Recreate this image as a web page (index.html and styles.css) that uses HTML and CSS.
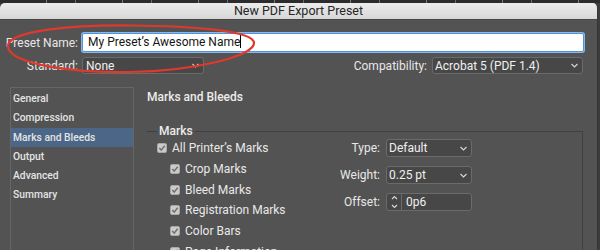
FILE: index.html
```html
<!DOCTYPE html>
<html>
<head>
<meta charset="utf-8">
<link rel="stylesheet" href="styles.css">
</head>
<body>
<div class="backdrop"></div>
<div class="dialog">
  <div class="titlebar">New PDF Export Preset</div>
  <div class="content-wrap">
    <div class="row row-name">
      <span class="lbl">Preset Name:</span>
      <div class="text-input">My Preset’s Awesome Name<span class="caret"></span></div>
    </div>
    <div class="row row-std">
      <span class="lbl">Standard:</span>
      <div class="select w-std"><span>None</span><svg class="chev" width="7" height="5" viewBox="0 0 7 5"><path d="M0.5 1 L3.5 4 L6.5 1"/></svg></div>
      <span class="lbl-compat">Compatibility:</span>
      <div class="select w-compat"><span>Acrobat 5 (PDF 1.4)</span><svg class="chev" width="7" height="5" viewBox="0 0 7 5"><path d="M0.5 1 L3.5 4 L6.5 1"/></svg></div>
    </div>
    <div class="main">
      <ul class="nav">
        <li>General</li>
        <li>Compression</li>
        <li class="active">Marks and Bleeds</li>
        <li>Output</li>
        <li>Advanced</li>
        <li>Summary</li>
      </ul>
      <section class="panel">
        <h2 class="panel-title">Marks and Bleeds</h2>
        <fieldset class="group">
          <legend>Marks</legend>
          <div class="group-body">
            <div class="checks">
              <div class="check"><svg class="cb" width="10" height="10" viewBox="0 0 10 10"><rect x="0.5" y="0.5" width="9" height="9" rx="1.5"/><path d="M2.3 5.1 L4.2 7.1 L7.7 2.7"/></svg>All Printer’s Marks</div>
              <div class="check sub"><svg class="cb" width="10" height="10" viewBox="0 0 10 10"><rect x="0.5" y="0.5" width="9" height="9" rx="1.5"/><path d="M2.3 5.1 L4.2 7.1 L7.7 2.7"/></svg>Crop Marks</div>
              <div class="check sub"><svg class="cb" width="10" height="10" viewBox="0 0 10 10"><rect x="0.5" y="0.5" width="9" height="9" rx="1.5"/><path d="M2.3 5.1 L4.2 7.1 L7.7 2.7"/></svg>Bleed Marks</div>
              <div class="check sub"><svg class="cb" width="10" height="10" viewBox="0 0 10 10"><rect x="0.5" y="0.5" width="9" height="9" rx="1.5"/><path d="M2.3 5.1 L4.2 7.1 L7.7 2.7"/></svg>Registration Marks</div>
              <div class="check sub"><svg class="cb" width="10" height="10" viewBox="0 0 10 10"><rect x="0.5" y="0.5" width="9" height="9" rx="1.5"/><path d="M2.3 5.1 L4.2 7.1 L7.7 2.7"/></svg>Color Bars</div>
              <div class="check sub"><svg class="cb" width="10" height="10" viewBox="0 0 10 10"><rect x="0.5" y="0.5" width="9" height="9" rx="1.5"/><path d="M2.3 5.1 L4.2 7.1 L7.7 2.7"/></svg>Page Information</div>
            </div>
            <div class="options">
              <span class="opt-lbl">Type:</span>
              <div class="select opt"><span>Default</span><svg class="chev" width="7" height="5" viewBox="0 0 7 5"><path d="M0.5 1 L3.5 4 L6.5 1"/></svg></div>
              <span class="opt-lbl">Weight:</span>
              <div class="select opt"><span>0.25 pt</span><svg class="chev" width="7" height="5" viewBox="0 0 7 5"><path d="M0.5 1 L3.5 4 L6.5 1"/></svg></div>
              <span class="opt-lbl">Offset:</span>
              <div class="spin">
                <div class="spin-btn"><svg width="7" height="14" viewBox="0 0 7 14"><path d="M1 4 L3.5 1.5 L6 4"/><path d="M1 10 L3.5 12.5 L6 10"/></svg></div>
                <span class="spin-val">0p6</span>
              </div>
            </div>
          </div>
        </fieldset>
      </section>
    </div>
  </div>
</div>
<svg class="annotation" width="600" height="250" viewBox="0 0 600 250">
  <path d="M 8 46 C 8 31, 70 25, 130 25.5 C 195 26, 254 31, 254 43 C 254 56, 195 71, 130 72 C 62 73, 8 62, 8 46 Z"/>
</svg>
</body>
</html>
```

FILE: styles.css
```css
html, body {
  margin: 0;
  padding: 0;
}
body {
  width: 600px;
  height: 250px;
  overflow: hidden;
  background: #3c3c3c;
  font-family: Roboto, "Liberation Sans", sans-serif;
  font-size: 12px;
  color: #e8e8e8;
}
.backdrop {
  height: 3px;
  background: repeating-linear-gradient(90deg, #2c2c2c 0 46px, #7a7a7a 46px 47px, #2c2c2c 47px 75px, #6a6a6a 75px 76px);
}
.dialog {
  width: 597px;
  height: 247px;
  background: #535353;
  border-radius: 5px 5px 0 0;
  overflow: hidden;
  border-right: 1px solid #353535;
}
.titlebar {
  height: 16px;
  line-height: 16px;
  text-align: center;
  font-size: 12.5px;
  color: #262626;
  background: linear-gradient(#ececec, #d6d6d6);
  border-bottom: 1px solid #464646;
}
.content-wrap {
  padding-top: 13px;
}
.row {
  display: flex;
  align-items: center;
}
.row-name {
  height: 19px;
}
.lbl {
  width: 78px;
  margin-right: 4px;
  text-align: right;
  flex: none;
}
.text-input {
  flex: none;
  width: 502px;
  height: 19px;
  box-sizing: border-box;
  background: #ffffff;
  border: 1px solid #4f92dc;
  box-shadow: 0 0 0 1px #8ab8ea;
  border-radius: 2px;
  padding-left: 5px;
  line-height: 17px;
  color: #151515;
  white-space: nowrap;
}
.caret {
  display: inline-block;
  width: 1px;
  height: 13px;
  background: #000;
  vertical-align: -2px;
}
.row-std {
  margin-top: 5px;
  height: 17px;
  padding-right: 14px;
}
.lbl-compat {
  margin-left: auto;
  margin-right: 5px;
}
.select {
  box-sizing: border-box;
  height: 17px;
  background: #474747;
  border: 1px solid #6b6b6b;
  border-radius: 3px;
  display: flex;
  align-items: center;
  justify-content: space-between;
  padding: 0 4px 0 3px;
  color: #f0f0f0;
  white-space: nowrap;
}
.w-std { width: 122px; flex: none; }
.w-compat { width: 151px; flex: none; padding-left: 2px; }
.chev path, .spin-btn path {
  fill: none;
  stroke: #d8d8d8;
  stroke-width: 1.1;
}
.main {
  margin-top: 13px;
  display: flex;
}
.nav {
  list-style: none;
  margin: 0 0 0 10px;
  padding: 1px 0 0;
  width: 124px;
  height: 170px;
  box-sizing: border-box;
  border: 1px solid #666666;
  border-bottom: none;
  flex: none;
}
.nav li {
  height: 19.3px;
  line-height: 19px;
  padding-left: 2px;
  font-size: 10.3px;
  font-weight: 500;
  color: #e4e4e4;
  white-space: nowrap;
}
.nav li.active {
  background: #4b6686;
}
.panel {
  flex: 1;
  margin: 0 14px 0 13px;
}
.panel-title {
  margin: 0;
  font-size: 12px;
  font-weight: 500;
  line-height: 20px;
  color: #ececec;
}
.group {
  margin: 17px 0 0;
  padding: 0;
  border: none;
  border-top: 1px solid #404040;
  border-right: 1px solid #404040;
  min-width: 0;
}
.group legend {
  margin-left: 10px;
  padding: 0 2px;
  line-height: 14px;
  font-weight: 500;
  color: #ececec;
}
.group-body {
  display: flex;
  justify-content: space-between;
}
.checks {
  padding-left: 10px;
}
.check {
  height: 20.7px;
  display: flex;
  align-items: center;
  gap: 5px;
  white-space: nowrap;
}
.check.sub {
  padding-left: 13px;
}
.cb {
  flex: none;
}
.cb rect {
  fill: #cbcbcb;
  stroke: #a8a8a8;
}
.cb path {
  fill: none;
  stroke: #707070;
  stroke-width: 1.5;
}
.options {
  display: grid;
  grid-template-columns: auto 86px;
  column-gap: 6px;
  row-gap: 9px;
  align-items: center;
  margin: 1px 110px 0 0;
  align-self: flex-start;
}
.opt-lbl {
  text-align: right;
}
.select.opt {
  height: 18px;
  padding-left: 2px;
}
.spin {
  box-sizing: border-box;
  height: 18px;
  background: #474747;
  border: 1px solid #6b6b6b;
  border-radius: 3px;
  display: flex;
  align-items: center;
}
.spin-btn {
  width: 14px;
  height: 100%;
  border-right: 1px solid #6b6b6b;
  display: flex;
  align-items: center;
  justify-content: center;
}
.spin-val {
  padding-left: 4px;
  color: #f0f0f0;
}
.annotation {
  position: absolute;
  left: 0;
  top: 0;
  pointer-events: none;
}
.annotation path {
  fill: none;
  stroke: #e0392c;
  stroke-width: 2.2;
}
```
